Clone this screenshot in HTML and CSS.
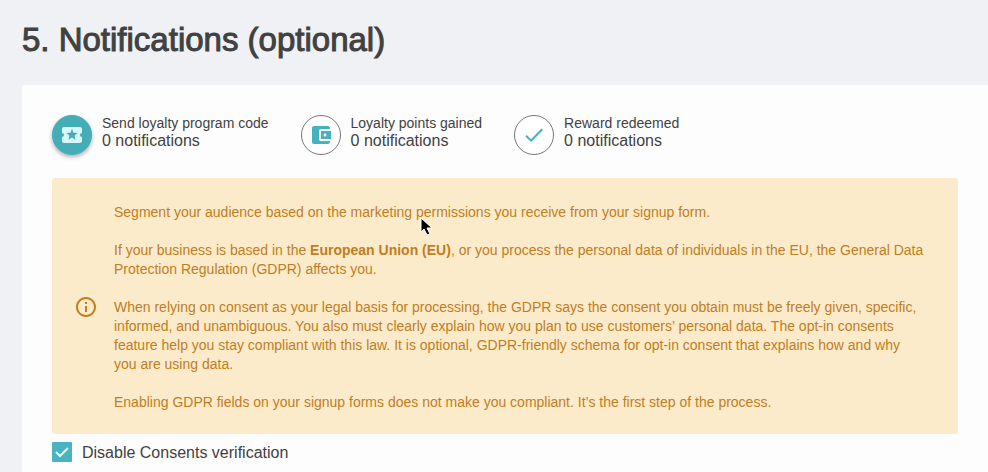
FILE: index.html
```html
<!DOCTYPE html>
<html lang="en">
<head>
    <meta charset="UTF-8">
    <meta name="viewport" content="width=device-width, initial-scale=1.0">
    <title>Notifications</title>
    <link rel="stylesheet" href="styles.css">
</head>
<body>
    <h1>5. Notifications (optional)</h1>

    <main class="card">
        <div class="steps">
            <button type="button" class="step active">
                <span class="step-icon">
                    <svg width="24" height="24" viewBox="0 0 24 24">
                        <path d="M20 12c0-1.100.9-2 2-2V6c0-1.100-.9-2-2-2H4c-1.100 0-1.990.9-1.990 2v4c1.100 0 1.990.9 1.990 2s-.89 2-2 2v4c0 1.100.9 2 2 2h16c1.100 0 2-.9 2-2v-4c-1.100 0-2-.9-2-2zm-4.420 4.800L12 14.500l-3.580 2.300 1.080-4.120-3.290-2.690 4.240-.25L12 5.800l1.540 3.950 4.240.25-3.290 2.690 1.090 4.110z"/>
                    </svg>
                </span>
                <span class="step-text">
                    <span class="step-name">Send loyalty program code</span>
                    <span class="step-count">0 notifications</span>
                </span>
            </button>
            <button type="button" class="step">
                <span class="step-icon">
                    <svg width="24" height="24" viewBox="0 0 24 24">
                        <path d="M21 18v1c0 1.100-.9 2-2 2H5c-1.110 0-2-.9-2-2V5c0-1.100.89-2 2-2h14c1.100 0 2 .9 2 2v1h-9c-1.110 0-2 .9-2 2v8c0 1.100.89 2 2 2h9zm-9-2h10V8H12v8zm4-2.500c-.83 0-1.500-.67-1.500-1.500s.67-1.500 1.500-1.500 1.500.67 1.500 1.500-.67 1.500-1.500 1.500z"/>
                    </svg>
                </span>
                <span class="step-text">
                    <span class="step-name">Loyalty points gained</span>
                    <span class="step-count">0 notifications</span>
                </span>
            </button>
            <button type="button" class="step">
                <span class="step-icon">
                    <svg width="24" height="24" viewBox="0 0 24 24">
                        <path d="M9 16.170L4.830 12l-1.420 1.410L9 19 21 7l-1.410-1.410z"/>
                    </svg>
                </span>
                <span class="step-text">
                    <span class="step-name">Reward redeemed</span>
                    <span class="step-count">0 notifications</span>
                </span>
            </button>
        </div>

        <div class="notice">
            <svg class="notice-icon" width="24" height="24" viewBox="0 0 24 24">
                <path d="M11 7h2v2h-2zm0 4h2v6h-2zm1-9C6.480 2 2 6.480 2 12s4.480 10 10 10 10-4.480 10-10S17.520 2 12 2zm0 18c-4.410 0-8-3.590-8-8s3.590-8 8-8 8 3.590 8 8-3.590 8-8 8z"/>
            </svg>
            <div class="notice-text">
                <p>Segment your audience based on the marketing permissions you receive from your signup form.</p>
                <p>If your business is based in the <strong>European Union (EU)</strong>, or you process the personal data of individuals in the EU, the General Data Protection Regulation (GDPR) affects you.</p>
                <p>When relying on consent as your legal basis for processing, the GDPR says the consent you obtain must be freely given, specific, informed, and unambiguous. You also must clearly explain how you plan to use customers’ personal data. The opt-in consents feature help you stay compliant with this law. It is optional, GDPR-friendly schema for opt-in consent that explains how and why you are using data.</p>
                <p>Enabling GDPR fields on your signup forms does not make you compliant. It’s the first step of the process.</p>
            </div>
            <!-- Mouse pointer -->
            <svg class="pointer" width="14" height="20" viewBox="0 0 14 20">
                <path d="M1 1v14l3-3 3 6 3-1-3-6h5z"/>
            </svg>
        </div>

        <div class="consent">
            <input type="checkbox" id="disableConsents" checked>
            <label for="disableConsents">Disable Consents verification</label>
        </div>
    </main>
</body>
</html>
```
FILE: styles.css
```css
* {
    box-sizing: border-box;
}

body {
    display: flex;
    flex-direction: column;
    min-height: 100vh;
    margin: 0;
    padding-left: 22px;
    background-color: #f0f1f4;
    color: #414141;
    font-family: "Helvetica Neue", "Liberation Sans", Arial, sans-serif;
}

h1 {
    margin: 0;
    padding: 20px 0 25px;
    font-size: 33px;
    line-height: 40px;
    font-weight: 500;
    -webkit-text-stroke: 1px #414141;
}

.card {
    flex: 1;
    padding: 24px 30px 8px;
    background-color: #fefdfe;
}

.steps {
    display: flex;
    gap: 32px;
    margin-bottom: 23px;
}

.step {
    display: flex;
    align-items: center;
    gap: 10px;
    padding: 0;
    border: none;
    background: none;
    color: inherit;
    font-family: inherit;
    text-align: left;
    cursor: pointer;
}

.step-icon {
    display: flex;
    align-items: center;
    justify-content: center;
    width: 40px;
    height: 40px;
    margin-top: 6px;
    border: 1px solid #777;
    border-radius: 50%;
    background-color: #fff;
    fill: #45b2be;
}

.step.active .step-icon {
    border-color: #43aeb8;
    background-color: #43aeb8;
    box-shadow: 0 2px 4px rgba(0, 0, 0, 0.3);
    fill: #d9f7f8;
}

.step-name, .step-count {
    display: block;
    line-height: 17px;
}

.step-name {
    font-size: 14px;
}

.step-count {
    font-size: 16px;
}

.notice {
    position: relative;
    display: flex;
    align-items: center;
    gap: 16px;
    padding: 23px 33px 22px 22px;
    border-radius: 3px;
    background-color: #fcebca;
    color: #c17d1f;
    font-size: 14px;
    line-height: 19px;
}

.notice-icon {
    flex: none;
    fill: #c17d1f;
}

.notice-text {
    padding-top: 2px;
}

.notice p {
    margin: 0 0 19px;
}

.notice p:last-child {
    margin-bottom: 0;
}

.pointer {
    position: absolute;
    top: 39px;
    left: 368px;
    fill: #000;
    stroke: #fff;
}

.consent {
    display: flex;
    align-items: flex-start;
    gap: 10px;
    margin-top: 8px;
    font-size: 16px;
    line-height: 22px;
}

.consent input {
    appearance: none;
    width: 20px;
    height: 20px;
    margin: 0;
    border-radius: 1px;
    background: #49b4c0 url("data:image/svg+xml,%3Csvg xmlns='http://www.w3.org/2000/svg' viewBox='0 0 20 20'%3E%3Cpath d='M4 10l4 4 8-8' fill='none' stroke='%23e4fafa' stroke-width='2'/%3E%3C/svg%3E");
}
```
